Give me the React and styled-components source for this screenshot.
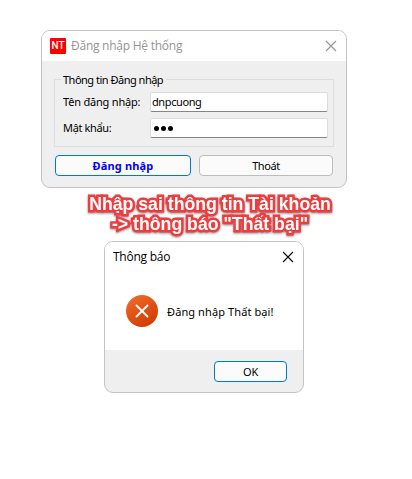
import React from "react";
import styled, { createGlobalStyle } from "styled-components";

const GlobalStyle = createGlobalStyle`
  *, *::before, *::after { box-sizing: border-box; }
  body { margin: 0; background: #fff; color: #000; font: 11px/14px "Noto Sans", sans-serif; }
`;

const Page = styled.main`
  display: flex;
  flex-direction: column;
  height: 479px;
  padding-top: 30px;
  overflow: hidden;
`;

const Window = styled.section`
  display: flex;
  flex-direction: column;
  width: ${(p) => p.$width}px;
  height: ${(p) => p.$height}px;
  margin-left: ${(p) => p.$left}px;
  border: 1px solid #c3c3c3;
  border-radius: 9px;
  background: #efefef;
  overflow: hidden;
`;

const TitleBar = styled.header`
  display: flex;
  align-items: center;
  height: 30px;
  padding: 0 9px 0 8px;
  background: #fff;
  color: ${(p) => (p.$inactive ? "#959595" : "#000")};
`;

const Title = styled.h1`
  flex: 1;
  margin: 0;
  font: 400 12px/16px "Open Sans", sans-serif;
  letter-spacing: -0.25px;
  white-space: nowrap;
`;

const AppIcon = styled.span`
  display: flex;
  align-items: center;
  justify-content: center;
  width: 16px;
  height: 16px;
  margin-right: 5px;
  border-radius: 1px;
  background: #f00;
  color: #fff;
  font: 500 10px/16px "Roboto", sans-serif;
`;

const CloseGlyph = styled.svg`
  display: block;
  width: 12px;
  height: 12px;
  margin-top: -1px;
  fill: none;
  stroke: currentColor;
  stroke-width: 1.1;
`;

const Form = styled.form`
  padding: 18px 12px 0;
`;

const Group = styled.fieldset`
  display: grid;
  grid-template-columns: 87px 178px;
  grid-auto-rows: 20px;
  row-gap: 6px;
  position: relative;
  height: 68px;
  margin: 0;
  padding: 12px 0 0 8px;
  border: 1px solid #dcdcdc;
`;

const Legend = styled.span`
  position: absolute;
  top: -7px;
  left: 6px;
  padding: 0 3px 0 2px;
  background: #efefef;
  white-space: nowrap;
  letter-spacing: ${(p) => p.$spacing || 0}px;
`;

const Label = styled.label`
  line-height: 19px;
  white-space: nowrap;
  letter-spacing: ${(p) => p.$spacing || 0}px;
`;

const Field = styled.div`
  display: flex;
  align-items: center;
  gap: 2px;
  height: 20px;
  padding-left: ${(p) => (p.$masked ? 3 : 1)}px;
  border: 1px solid #dcdcdc;
  border-bottom-color: #858585;
  border-radius: 2px;
  background: #fff;
  letter-spacing: ${(p) => p.$spacing || 0}px;
`;

const Dot = styled.i`
  width: 5px;
  height: 5px;
  border-radius: 50%;
  background: #000;
  margin-top: 1px;
`;

const Buttons = styled.div`
  display: flex;
  gap: 8px;
  padding: 8px 0 0 1px;
`;

const Button = styled.button`
  width: ${(p) => p.$width}px;
  height: 21px;
  padding: 0;
  border: 1px solid ${(p) => (p.$primary ? "#0078d4" : "#bcbcbc")};
  border-radius: 4px;
  background: #fbfbfb;
  color: ${(p) => (p.$strong ? "#0000f5" : "#000")};
  font: ${(p) => (p.$strong ? 700 : 400)} 11px/18px "Noto Sans", sans-serif;
  letter-spacing: ${(p) => p.$spacing || 0}px;
`;

const Caption = styled.p`
  height: 53px;
  margin: 0;
  padding: 6px 0 0 8px;
  color: #fff;
  font: 700 17.7px/20px "Liberation Sans", Arial, sans-serif;
  text-align: center;
  white-space: nowrap;
  -webkit-text-stroke: 5px #ee3d3d;
  paint-order: stroke fill;
  stroke-linejoin: round;
  filter: drop-shadow(0 1px 1px rgba(0, 0, 0, 0.45));
`;

const CaptionLine = styled.span`
  display: block;
`;

const Message = styled.div`
  display: flex;
  align-items: center;
  gap: 9px;
  height: 78px;
  padding-left: 21px;
  background: #fff;
  letter-spacing: 0.1px;
`;

const MessageText = styled.span`
  padding-top: 2px;
`;

const ErrorIcon = styled.svg`
  width: 32px;
  height: 32px;
`;

const Actions = styled.footer`
  display: flex;
  justify-content: flex-end;
  padding: 11px 16px 0 0;
`;

function Close() {
  return (
    <CloseGlyph viewBox="0 0 12 12">
      <path d="M1 1 11 11M11 1 1 11" />
    </CloseGlyph>
  );
}

export default function App() {
  return (
    <Page>
      <GlobalStyle />
      <Window $width={306} $height={158} $left={41}>
        <TitleBar $inactive>
          <AppIcon>NT</AppIcon>
          <Title>Đăng nhập Hệ thống</Title>
          <Close />
        </TitleBar>
        <Form>
          <Group>
            <Legend $spacing={-0.5}>Thông tin Đăng nhập</Legend>
            <Label $spacing={-0.2}>Tên đăng nhập:</Label>
            <Field $spacing={-0.4}>dnpcuong</Field>
            <Label $spacing={-0.35}>Mật khẩu:</Label>
            <Field $masked>
              <Dot />
              <Dot />
              <Dot />
            </Field>
          </Group>
          <Buttons>
            <Button type="button" $width={136} $primary $strong $spacing={0.15}>Đăng nhập</Button>
            <Button type="button" $width={134} $spacing={-0.4}>Thoát</Button>
          </Buttons>
        </Form>
      </Window>
      <Caption>
        <CaptionLine>Nhập sai thông tin Tài khoản</CaptionLine>
        <CaptionLine>-&gt; thông báo "Thất bại"</CaptionLine>
      </Caption>
      <Window $width={200} $height={152} $left={104}>
        <TitleBar>
          <Title>Thông báo</Title>
          <Close />
        </TitleBar>
        <Message>
          <ErrorIcon viewBox="0 0 32 32">
            <defs>
              <linearGradient id="error-fill" x1="0.2" y1="0" x2="0.8" y2="1">
                <stop offset="0" stopColor="#f06a28" />
                <stop offset="1" stopColor="#cf3800" />
              </linearGradient>
            </defs>
            <circle cx="16" cy="16" r="16" fill="url(#error-fill)" />
            <path d="m10.5 10.5 11 11m0-11-11 11" stroke="#fff" strokeWidth="1.9" strokeLinecap="round" />
          </ErrorIcon>
          <MessageText>Đăng nhập Thất bại!</MessageText>
        </Message>
        <Actions>
          <Button type="button" $width={73} $primary $spacing={-0.3}>OK</Button>
        </Actions>
      </Window>
    </Page>
  );
}
